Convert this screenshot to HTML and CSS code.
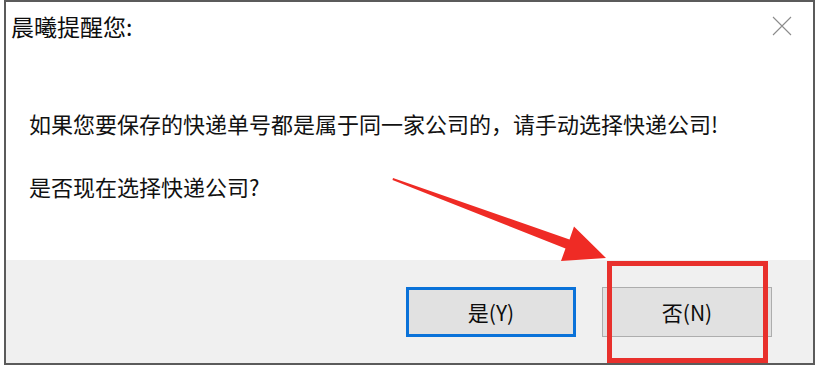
FILE: index.html
```html
<!DOCTYPE html>
<html lang="zh-CN">
<head>
<meta charset="utf-8">
<title>晨曦提醒您</title>
<link rel="stylesheet" href="styles.css">
</head>
<body>
<div class="dialog">
  <div class="titlebar">
    <span class="title">晨曦提醒您:</span>
    <svg class="close" width="20" height="20" viewBox="0 0 20 20" aria-hidden="true">
      <path d="M1 1 L19 19 M19 1 L1 19" stroke="#8c8c8c" stroke-width="1.1" fill="none"/>
    </svg>
  </div>
  <div class="content">
    <p class="msg first">如果您要保存的快递单号都是属于同一家公司的，请手动选择快递公司!</p>
    <p class="msg second">是否现在选择快递公司?</p>
  </div>
  <div class="footer">
    <button class="btn btn-default">是(Y)</button>
    <button class="btn">否(N)</button>
  </div>
  <svg class="arrow" width="818" height="370" viewBox="0 0 818 370" aria-hidden="true">
    <polygon points="393,178 569.5,239.5 574,226.5 606,258 561,261 565.5,248.5 392.5,180" fill="#ef2b25"/>
  </svg>
  <div class="highlight"></div>
</div>
</body>
</html>
```

FILE: styles.css
```css
html, body {
  margin: 0;
  padding: 0;
  background: #ffffff;
}

body {
  width: 818px;
  height: 370px;
  overflow: hidden;
  font-family: "Noto Sans CJK SC", "Liberation Sans", sans-serif;
  color: #111111;
}

.dialog {
  position: relative;
  box-sizing: border-box;
  margin-left: 4px;
  width: 811px;
  height: 365px;
  border: 2px solid #5b5b5b;
  display: flex;
  flex-direction: column;
  background: #ffffff;
}

.titlebar {
  height: 48px;
  display: flex;
  align-items: center;
  justify-content: space-between;
  padding: 0 21px 0 5px;
}

.title {
  font-size: 23px;
  color: #0d0d0d;
}

.close {
  display: block;
}

.content {
  flex: 1;
  padding: 0 0 0 23px;
}

.msg {
  margin: 0;
  font-size: 22px;
  line-height: 30px;
  white-space: nowrap;
}

.first {
  margin-top: 58px;
}

.second {
  margin-top: 33px;
}

.footer {
  height: 103px;
  background: #f0f0f0;
  display: flex;
  align-items: center;
  justify-content: flex-end;
  gap: 26px;
  padding-right: 41px;
}

.btn {
  box-sizing: border-box;
  width: 170px;
  height: 50px;
  background: #e1e1e1;
  border: 1px solid #adadad;
  border-radius: 0;
  font-family: "Noto Sans CJK SC", "Liberation Sans", sans-serif;
  font-size: 21px;
  color: #0d0d0d;
  padding: 0;
}

.btn-default {
  border: 3px solid #0a72d9;
}

.arrow {
  position: absolute;
  left: -6px;
  top: -2px;
  pointer-events: none;
}

.highlight {
  position: absolute;
  left: 601px;
  top: 259px;
  width: 161px;
  height: 102px;
  box-sizing: border-box;
  border: 5px solid #e8302c;
  pointer-events: none;
}
```
